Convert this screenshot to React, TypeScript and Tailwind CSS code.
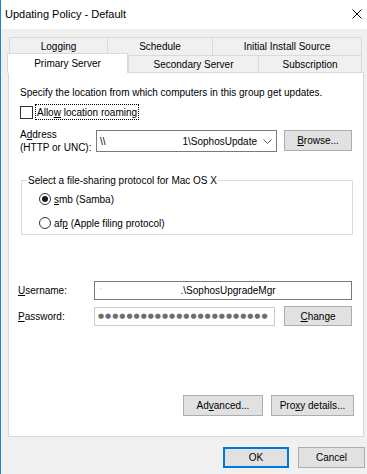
import React from 'react';

function Btn({ w, h = 'h-[21px]', def = false, children }: { w: string; h?: string; def?: boolean; children: React.ReactNode }) {
  return (
    <div
      className={`${w} ${h} flex items-center justify-center bg-[#e1e1e1] ${
        def ? 'border-2 border-[#0078d7]' : 'border border-[#adadad]'
      }`}
    >
      <span>{children}</span>
    </div>
  );
}

function Radio({ checked, children }: { checked?: boolean; children: React.ReactNode }) {
  return (
    <div className="flex items-center h-[16px] ml-[12px]">
      <div className="w-[12px] h-[12px] rounded-full border border-[#333333] bg-white flex items-center justify-center">
        {checked && <div className="w-[6px] h-[6px] rounded-full bg-[#1a1a1a]" />}
      </div>
      <span className="ml-[3px]">{children}</span>
    </div>
  );
}

export default function App() {
  const tabBase = 'flex items-center justify-center border-t border-l border-[#d9d9d9]';

  return (
    <div className="w-[367px] h-[474px] bg-[#f0f0f0] border-l border-[#1883d7] flex flex-col overflow-hidden font-['Liberation_Sans',Arial,sans-serif] text-[10px] leading-[13px] text-black">
      {/* title bar */}
      <div className="h-[29px] shrink-0 bg-white flex items-center justify-between pl-[4px] pr-[5px]">
        <span className="text-[11px]">Updating Policy - Default</span>
        <svg width="10" height="10" viewBox="0 0 10 10" className="mb-px">
          <path d="M0.5 0.5 L9.5 9.5 M9.5 0.5 L0.5 9.5" stroke="#000" strokeWidth="1" fill="none" />
        </svg>
      </div>

      {/* tab rows */}
      <div className="mt-[8px] flex ml-[8px] h-[18px]">
        <div className={`${tabBase} w-[98px]`}>Logging</div>
        <div className={`${tabBase} w-[105px]`}>Schedule</div>
        <div className={`${tabBase} w-[150px] border-r`}>Initial Install Source</div>
      </div>
      <div className="flex items-end ml-[6px] h-[17px]">
        <div className={`${tabBase} border-r w-[121px] h-[20px] -mb-px relative z-10 bg-white`}>Primary Server</div>
        <div className={`${tabBase} w-[130px] h-[17px]`}>Secondary Server</div>
        <div className={`${tabBase} border-r w-[104px] h-[17px]`}>Subscription</div>
      </div>

      {/* panel */}
      <div className="ml-[7px] w-[356px] h-[365px] shrink-0 bg-white border border-[#d9d9d9] pt-[13px] pl-[11px] pb-[20px] flex flex-col">
        <div>Specify the location from which computers in this group get updates.</div>

        <div className="mt-[5px] h-[16px] flex items-center">
          <div className="w-[13px] h-[13px] border border-[#333333] bg-white" />
          <div className="ml-[2px] h-[16px] flex items-center px-[1px] border border-dotted border-black">
            <span>
              Allo<u>w</u> location roaming
            </span>
          </div>
        </div>

        <div className="mt-[10px] flex items-start">
          <div className="w-[76px] -mt-[2px] -mb-[2px]">
            A<u>d</u>dress
            <br />
            (HTTP or UNC):
          </div>
          <div className="w-[181px] h-[22px] border border-[#7a7a7a] flex items-center pl-[3px] pr-[4px]">
            <span>\\</span>
            <span className="flex-1" />
            <span>1\SophosUpdate</span>
            <svg width="9" height="5" viewBox="0 0 9 5" className="ml-[6px]">
              <path d="M0.5 0.5 L4.5 4.5 L8.5 0.5" stroke="#555" strokeWidth="1" fill="none" />
            </svg>
          </div>
          <div className="ml-[7px]">
            <Btn w="w-[68px]">
              <u>B</u>rowse...
            </Btn>
          </div>
        </div>

        <fieldset className="mt-[22px] ml-[1px] w-[332px] border border-[#dcdcdc] pl-[5px] pb-[3px]">
          <legend className="px-[1px]">Select a file-sharing protocol for Mac OS X</legend>
          <div className="mt-[4px]">
            <Radio checked>
              <u>s</u>mb (Samba)
            </Radio>
          </div>
          <div className="mt-[8px]">
            <Radio>
              af<u>p</u> (Apple filing protocol)
            </Radio>
          </div>
        </fieldset>

        <div className="mt-[46px] flex items-center">
          <div className="w-[76px] -ml-[2px]">
            <u>U</u>sername:
          </div>
          <div className="w-[258px] h-[19px] border border-[#7a7a7a] flex items-center pl-[5px]">
            <span className="text-[#bbbbbb] text-[8px]">'</span>
            <span className="w-[79px]" />
            <span>.\SophosUpgradeMgr</span>
          </div>
        </div>

        <div className="mt-[6px] flex items-center">
          <div className="w-[76px] -ml-[2px]">
            <u>P</u>assword:
          </div>
          <div className="w-[181px] h-[19px] border border-[#cccccc] flex items-center pl-[3px]">
            <span className="text-[#6d6d6d] text-[7px] leading-[9px] tracking-[1px] whitespace-nowrap font-['DejaVu_Sans',sans-serif]">
              ●●●●●●●●●●●●●●●●●●●●●●●●
            </span>
          </div>
          <div className="ml-[9px]">
            <Btn w="w-[68px]" h="h-[20px]">
              <u>C</u>hange
            </Btn>
          </div>
        </div>

        <div className="mt-auto flex justify-end gap-[8px] mr-[9px]">
          <Btn w="w-[80px]">
            Ad<u>v</u>anced...
          </Btn>
          <Btn w="w-[83px]">
            Pro<u>x</u>y details...
          </Btn>
        </div>
      </div>

      {/* dialog buttons */}
      <div className="mt-[10px] flex justify-end gap-[9px] pr-[2px]">
        <Btn w="w-[66px]" def>
          OK
        </Btn>
        <Btn w="w-[67px]">Cancel</Btn>
      </div>
    </div>
  );
}
